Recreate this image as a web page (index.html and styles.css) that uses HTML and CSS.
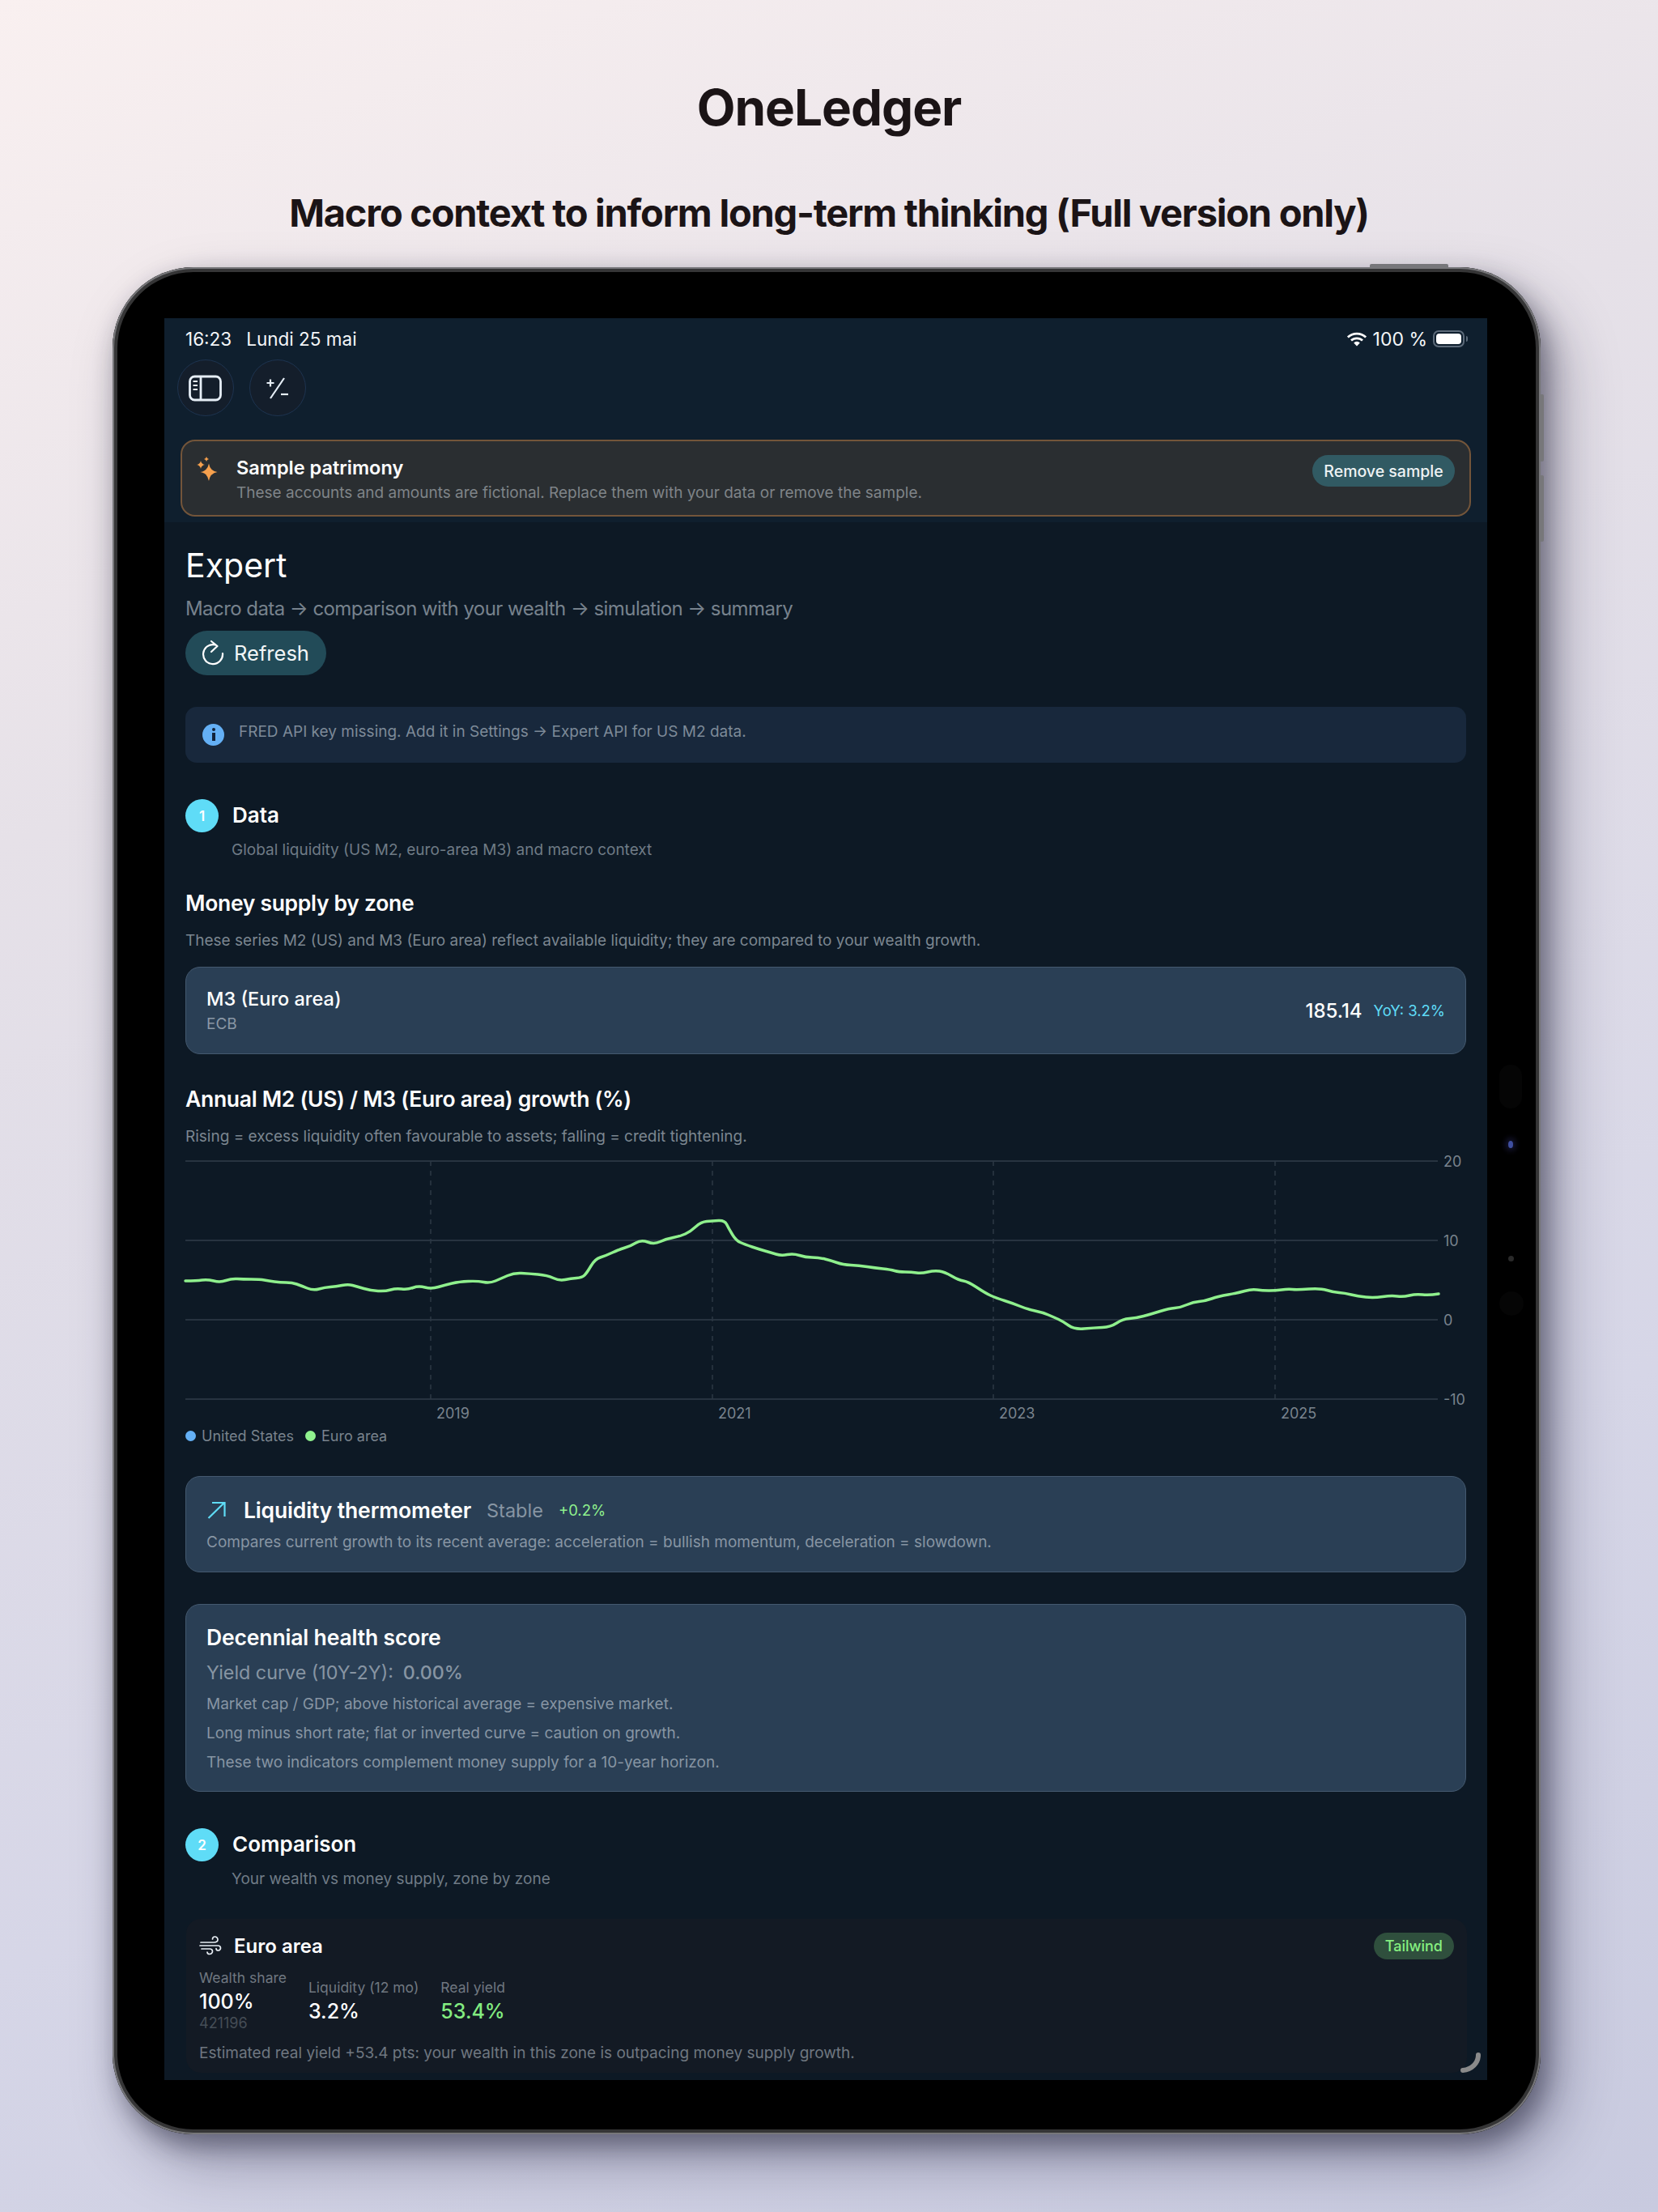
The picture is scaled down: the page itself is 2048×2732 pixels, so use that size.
FILE: index.html
```html
<!DOCTYPE html>
<html lang="en">
<head>
  <meta charset="UTF-8">
  <title>OneLedger</title>
  <link rel="stylesheet" href="styles.css">
</head>
<body>
  <h1 class="page-title">OneLedger</h1>
  <h2 class="page-sub">Macro context to inform long-term thinking (Full version only)</h2>

  <div class="device">
    <!-- hardware buttons and cameras -->
    <span class="hw hw-top"></span>
    <span class="hw hw-side1"></span>
    <span class="hw hw-side2"></span>
    <span class="cam cam-pill"></span>
    <span class="cam cam-blue"></span>
    <span class="cam cam-dot"></span>
    <span class="cam cam-round"></span>

    <div class="screen">
      <!-- Top bar -->
      <div class="topbar">
        <div class="status">
          <span class="status-time">16:23</span>
          <span>Lundi 25 mai</span>
          <span class="status-right">
            <svg class="wifi" width="26" height="18" viewBox="0 0 24 17" fill="none" stroke="#fff" stroke-width="2.6" stroke-linecap="butt">
              <path d="M1.5 6.2a15 15 0 0 1 21 0"/>
              <path d="M5.4 10a9.6 9.6 0 0 1 13.2 0"/>
              <path d="M12 16.5l-3.6-3.8a5 5 0 0 1 7.2 0z" fill="#fff" stroke="none"/>
            </svg>
            <span>100 %</span>
            <span class="battery"><span class="battery-fill"></span></span>
          </span>
        </div>
        <div class="tools">
          <span class="tool">
            <svg width="42" height="33" viewBox="0 0 42 33" fill="none" stroke="#e6eef6" stroke-width="2.800">
              <rect x="1.500" y="2" width="38" height="29" rx="6"/>
              <path d="M15 2v29"/>
              <path d="M5.500 8h5.500M5.500 13h5.500M5.500 18h5.500" stroke-width="2"/>
            </svg>
          </span>
          <span class="tool">
            <svg width="30" height="34" viewBox="0 0 30 34" fill="none" stroke="#e6eef6" stroke-width="2.200">
              <path d="M1.500 11h9M6 6.500v9"/>
              <path d="M23 5L6 30"/>
              <path d="M19 25h9"/>
            </svg>
          </span>
        </div>
        <div class="sample">
          <svg class="sample-icon" width="30" height="34" viewBox="0 0 30 34" fill="#f6a04d">
            <path d="M17 9.500Q18.500 18.500 27.500 20 18.500 21.500 17 31 15.500 21.500 6.500 20 15.500 18.500 17 9.500z"/>
            <path d="M7 6Q7.800 10.200 12 11 7.800 11.800 7 16 6.200 11.800 2 11 6.200 10.200 7 6z"/>
            <path d="M14 1Q14.500 3.500 17 4 14.500 4.500 14 7 13.500 4.500 11 4 13.500 3.500 14 1z"/>
          </svg>
          <div class="sample-text">
            <div class="sample-title">Sample patrimony</div>
            <div class="sample-desc">These accounts and amounts are fictional. Replace them with your data or remove the sample.</div>
          </div>
          <button class="sample-btn">Remove sample</button>
        </div>
      </div>

      <!-- Expert page -->
      <div class="content">
        <div class="expert-title">Expert</div>
        <div class="expert-sub">Macro data → comparison with your wealth → simulation → summary</div>
        <button class="refresh">
          <svg width="28" height="34" viewBox="0 0 28 34" fill="none" stroke="#fff" stroke-width="2.200" stroke-linecap="round" stroke-linejoin="round">
            <path d="M17 6.500A12 12 0 1 0 26 17"/>
            <path d="M12 2l7.500 6L12 15"/>
          </svg>
          Refresh
        </button>

        <div class="info">
          <span class="info-icon"><span class="info-i"></span></span>
          <span>FRED API key missing. Add it in Settings → Expert API for US M2 data.</span>
        </div>

        <div class="step step-first"><span class="step-num">1</span><span class="step-title">Data</span></div>
        <div class="step-sub">Global liquidity (US M2, euro-area M3) and macro context</div>

        <div class="section-title money">Money supply by zone</div>
        <div class="desc desc-under">These series M2 (US) and M3 (Euro area) reflect available liquidity; they are compared to your wealth growth.</div>

        <div class="card m3">
          <div>
            <div class="m3-name">M3 (Euro area)</div>
            <div class="m3-src">ECB</div>
          </div>
          <div class="m3-right">
            <span class="m3-val">185.14</span>
            <span class="m3-yoy">YoY: 3.2%</span>
          </div>
        </div>

        <div class="section-title annual">Annual M2 (US) / M3 (Euro area) growth (%)</div>
        <div class="desc desc-under">Rising = excess liquidity often favourable to assets; falling = credit tightening.</div>

        <svg class="chart" width="1582" height="340" viewBox="229 1420 1582 340">
          <g class="grid">
            <path d="M229 1434H1776M229 1532H1776M229 1630H1776M229 1728H1776"/>
          </g>
          <g class="grid-v">
            <path d="M532 1434V1728M880 1434V1728M1227 1434V1728M1575 1434V1728"/>
          </g>
          <path class="curve" d="M229 1582Q243 1582 249.500 1581Q256 1580 264 1582Q272 1584 279 1581.500Q286 1579 293 1579.500Q300 1580 310.500 1580Q321 1580 326.500 1581Q332 1582 339 1583Q346 1584 353.500 1584Q361 1584 366.500 1586Q372 1588 379.500 1591Q387 1594 394 1592Q401 1590 408 1589.500Q415 1589 422.500 1587.500Q430 1586 435.500 1587.500Q441 1589 449.500 1591.500Q458 1594 467 1594.500Q476 1595 482.500 1593Q489 1591 496 1592Q503 1593 510 1590.500Q517 1588 525 1590Q533 1592 541.500 1589.500Q550 1587 558.500 1585Q567 1583 578.500 1582.500Q590 1582 597.500 1583.500Q605 1585 612 1582Q619 1579 627 1575.500Q635 1572 644 1572.500Q653 1573 664.500 1574Q676 1575 683.500 1578.500Q691 1582 698 1580.500Q705 1579 712 1578.500Q719 1578 722 1575Q725 1572 730 1563.500Q735 1555 741.500 1553Q748 1551 756.500 1547Q765 1543 772 1541Q779 1539 785.500 1535Q792 1531 800 1534Q808 1537 815.500 1533.500Q823 1530 831.500 1528.500Q840 1527 846.500 1524Q853 1521 859.500 1515Q866 1509 873 1508.500Q880 1508 887.500 1507.500Q895 1507 897.500 1512Q900 1517 904.500 1524.500Q909 1532 914.500 1534.500Q920 1537 929 1540Q938 1543 945 1545Q952 1547 958.500 1549Q965 1551 972.500 1549.500Q980 1548 987.500 1550.500Q995 1553 1003 1553Q1011 1553 1019 1555Q1027 1557 1034 1559.500Q1041 1562 1051 1562.500Q1061 1563 1071 1564.500Q1081 1566 1090.500 1567Q1100 1568 1105 1569.500Q1110 1571 1118 1571Q1126 1571 1132 1572Q1138 1573 1146 1571Q1154 1569 1160.500 1570Q1167 1571 1175.500 1576Q1184 1581 1190 1582Q1196 1583 1206.500 1590Q1217 1597 1223.500 1600Q1230 1603 1241 1606.500Q1252 1610 1260.500 1613.500Q1269 1617 1278.500 1619Q1288 1621 1295 1624Q1302 1627 1307.500 1629.500Q1313 1632 1320 1637Q1327 1642 1339 1641Q1351 1640 1361.500 1639.500Q1372 1639 1379.500 1634Q1387 1629 1395 1628.500Q1403 1628 1412.500 1625.500Q1422 1623 1433 1619.500Q1444 1616 1451 1615.500Q1458 1615 1466 1611.500Q1474 1608 1481 1607.500Q1488 1607 1496.500 1604Q1505 1601 1517 1599Q1529 1597 1537.500 1594.500Q1546 1592 1552.500 1593Q1559 1594 1567.500 1594Q1576 1594 1583 1593Q1590 1592 1596.500 1592.500Q1603 1593 1617 1592Q1631 1591 1639 1593.500Q1647 1596 1654 1596.500Q1661 1597 1669 1599Q1677 1601 1687 1602Q1697 1603 1708 1601.500Q1719 1600 1726 1601Q1733 1602 1741 1600Q1749 1598 1757 1599Q1765 1600 1777 1598"/>
          <g class="axis">
            <text x="1783" y="1441">20</text>
            <text x="1783" y="1539">10</text>
            <text x="1783" y="1637">0</text>
            <text x="1783" y="1735">-10</text>
            <text x="539" y="1752">2019</text>
            <text x="887" y="1752">2021</text>
            <text x="1234" y="1752">2023</text>
            <text x="1582" y="1752">2025</text>
          </g>
        </svg>

        <div class="legend">
          <span class="legend-dot dot-blue"></span><span>United States</span>
          <span class="legend-dot dot-green"></span><span>Euro area</span>
        </div>

        <div class="card thermo">
          <div class="thermo-head">
            <svg width="24" height="22" viewBox="0 0 24 22" fill="none" stroke="#5fdcf5" stroke-width="2.200">
              <path d="M1.500 21L21 2M6 2h15.500v17"/>
            </svg>
            <span class="card-title">Liquidity thermometer</span>
            <span class="thermo-state">Stable</span>
            <span class="thermo-delta">+0.2%</span>
          </div>
          <div class="card-note">Compares current growth to its recent average: acceleration = bullish momentum, deceleration = slowdown.</div>
        </div>

        <div class="card decennial">
          <div class="card-title">Decennial health score</div>
          <div class="yield">Yield curve (10Y-2Y):<span class="yield-val">0.00%</span></div>
          <div class="dec-line">Market cap / GDP; above historical average = expensive market.</div>
          <div class="dec-line">Long minus short rate; flat or inverted curve = caution on growth.</div>
          <div class="dec-line">These two indicators complement money supply for a 10-year horizon.</div>
        </div>

        <div class="step step-second"><span class="step-num">2</span><span class="step-title">Comparison</span></div>
        <div class="step-sub step-sub2">Your wealth vs money supply, zone by zone</div>

        <div class="zone">
          <div class="zone-head">
            <svg width="28" height="24" viewBox="0 0 28 24" fill="none" stroke="#e8eef4" stroke-width="1.700" stroke-linecap="round">
              <path d="M2 8h16c4 0 5-2 5-3.500S21.500 1 19.500 1 16.500 2.500 16.500 4"/>
              <path d="M1 12h22c2.500 0 3.500 1.500 3.500 3s-1.500 3-3 3-2.500-1-2.500-2.500"/>
              <path d="M3 16h10c2.500 0 3.500 1.500 3.500 3s-1.500 3.500-3.500 3.500-3-1-3-2.500"/>
            </svg>
            <span class="zone-name">Euro area</span>
            <span class="badge">Tailwind</span>
          </div>
          <div class="metrics">
            <div class="metric">
              <div class="metric-label">Wealth share</div>
              <div class="metric-val">100%</div>
              <div class="metric-extra">421196</div>
            </div>
            <div class="metric">
              <div class="metric-label">Liquidity (12 mo)</div>
              <div class="metric-val">3.2%</div>
            </div>
            <div class="metric">
              <div class="metric-label">Real yield</div>
              <div class="metric-val metric-green">53.4%</div>
            </div>
          </div>
          <div class="zone-note">Estimated real yield +53.4 pts: your wealth in this zone is outpacing money supply growth.</div>
        </div>
      </div>

      <svg class="corner" width="30" height="30" viewBox="0 0 30 30" fill="none" stroke="#8a8a8a" stroke-width="6" stroke-linecap="round">
        <path d="M25 5c0 10-8 18-19 19"/>
      </svg>
    </div>
  </div>
</body>
</html>
```

FILE: styles.css
```css
/* Page */
html, body {
  margin: 0;
  height: 2732px;
  overflow: hidden;
}
body {
  display: flex;
  flex-direction: column;
  align-items: center;
  padding-top: 93px;
  box-sizing: border-box;
  background: linear-gradient(160deg, #f9f0f0 0%, #e6e1e8 30%, #d6d6e7 70%, #c8cadf 100%);
  font-family: Inter, "Liberation Sans", sans-serif;
}
.page-title {
  margin: 0;
  height: 80px;
  line-height: 80px;
  font-size: 62px;
  font-weight: 700;
  letter-spacing: -1px;
  color: #1b1416;
}
.page-sub {
  margin: 60px 0 0;
  height: 60px;
  line-height: 60px;
  font-size: 47px;
  font-weight: 700;
  letter-spacing: -1.25px;
  color: #1b1416;
}

/* Device frame */
.device {
  position: relative;
  margin: 37px 6px 0 0;
  width: 1764px;
  height: 2306px;
  box-sizing: border-box;
  padding: 63px 66px 67px 64px;
  background: #000;
  border-radius: 100px;
  box-shadow:
    inset 0 0 0 2px #77777a,
    inset 0 0 0 6px #353536,
    8px 14px 30px rgba(30, 30, 50, 0.45),
    24px 34px 70px rgba(30, 30, 60, 0.35);
}
.hw {
  position: absolute;
  background: #77777a;
}
.hw-top {
  left: 1553px;
  top: -4px;
  width: 97px;
  height: 4px;
  border-radius: 2px 2px 0 0;
}
.hw-side1, .hw-side2 {
  left: 100%;
  width: 4px;
  border-radius: 0 2px 2px 0;
}
.hw-side1 { top: 157px; height: 83px; }
.hw-side2 { top: 257px; height: 82px; }
.cam {
  position: absolute;
  border-radius: 50%;
}
.cam-pill {
  left: 1713px;
  top: 985px;
  width: 28px;
  height: 54px;
  border-radius: 14px;
  background: #050505;
}
.cam-blue {
  left: 1724px;
  top: 1079px;
  width: 6px;
  height: 9px;
  background: #3f4fa0;
  box-shadow: 0 0 6px 4px #12122a;
}
.cam-dot {
  left: 1724px;
  top: 1221px;
  width: 7px;
  height: 7px;
  background: #2a2a2a;
}
.cam-round {
  left: 1713px;
  top: 1265px;
  width: 30px;
  height: 30px;
  background: #050505;
}

/* Screen */
.screen {
  position: relative;
  height: 2176px;
  overflow: hidden;
  background: #0d1925;
  color: #fff;
}
.topbar {
  height: 252px;
  box-sizing: border-box;
  padding-top: 11px;
  background: #0f1f2e;
}
.status {
  display: flex;
  align-items: center;
  height: 29px;
  padding: 0 28px 0 26px;
  font-size: 22.500px;
  color: #f4f6f8;
}
.status-time {
  margin-right: 18px;
}
.status-right {
  margin-left: auto;
  display: flex;
  align-items: center;
  gap: 7px;
  font-size: 23px;
}
.battery {
  position: relative;
  display: block;
  width: 39px;
  height: 21px;
  box-sizing: border-box;
  border: 2px solid #5d6b7a;
  border-radius: 7px;
  padding: 2px;
}
.battery::after {
  content: "";
  position: absolute;
  right: -6px;
  top: 5px;
  width: 2px;
  height: 7px;
  background: #5d6b7a;
  border-radius: 0 2px 2px 0;
}
.battery-fill {
  display: block;
  height: 100%;
  background: #fff;
  border-radius: 4px;
}
.tools {
  display: flex;
  gap: 19px;
  margin: 11px 0 0 16px;
}
.tool {
  display: flex;
  align-items: center;
  justify-content: center;
  width: 70px;
  height: 70px;
  box-sizing: border-box;
  border: 1.500px solid #1e3450;
  border-radius: 50%;
  background: #141e2b;
}

/* Sample banner */
.sample {
  display: flex;
  align-items: flex-start;
  height: 95px;
  box-sizing: border-box;
  margin: 29px 20px 0;
  padding: 18px 18px 0 16px;
  background: #2a2e31;
  border: 2px solid #73553a;
  border-radius: 18px;
}
.sample-icon {
  flex-shrink: 0;
}
.sample-text {
  margin-left: 21px;
}
.sample-title {
  height: 30px;
  line-height: 30px;
  font-size: 23.500px;
  font-weight: 600;
}
.sample-desc {
  margin-top: 4px;
  line-height: 24px;
  font-size: 19px;
  color: #7f8488;
}
.sample-btn {
  margin: -1px 0 0 auto;
  height: 39px;
  width: 176px;
  padding: 0;
  border: none;
  border-radius: 20px;
  background: #315a63;
  color: #eef3f4;
  font: 500 19.500px Inter, "Liberation Sans", sans-serif;
}

/* Content */
.content {
  padding: 0 26px;
}
.expert-title {
  margin-top: 28px;
  height: 50px;
  line-height: 50px;
  font-size: 41px;
}
.expert-sub {
  margin-top: 14px;
  height: 30px;
  line-height: 30px;
  font-size: 24px;
  letter-spacing: -0.56px;
  color: #77828d;
}
.refresh {
  display: flex;
  align-items: center;
  gap: 12px;
  margin-top: 12px;
  height: 55px;
  padding: 0 21px 0 20px;
  border: none;
  border-radius: 28px;
  background: #224b58;
  color: #f2f6f7;
  font: 400 25.500px Inter, "Liberation Sans", sans-serif;
}
.info {
  display: flex;
  align-items: flex-start;
  margin-top: 39px;
  height: 69px;
  box-sizing: border-box;
  padding: 19px 0 0 21px;
  background: #18283c;
  border-radius: 14px;
  line-height: 24px;
  font-size: 19px;
  color: #7d8a98;
}
.info-icon {
  position: relative;
  flex-shrink: 0;
  width: 27px;
  height: 27px;
  margin: 2px 18px 0 0;
  border-radius: 50%;
  background: #64b0f5;
}
.info-i {
  position: absolute;
  left: 12px;
  top: 11px;
  width: 4px;
  height: 10px;
  background: #12233a;
}
.info-i::before {
  content: "";
  position: absolute;
  left: 0;
  top: -6px;
  width: 4px;
  height: 4px;
  border-radius: 50%;
  background: #12233a;
}

/* Numbered steps */
.step {
  display: flex;
  align-items: center;
  gap: 17px;
  height: 41px;
}
.step-first { margin-top: 45px; }
.step-second { margin-top: 45px; }
.step-num {
  display: flex;
  align-items: center;
  justify-content: center;
  width: 41px;
  height: 41px;
  border-radius: 50%;
  background: #5fdcf7;
  font-size: 17px;
  font-weight: 600;
}
.step-title {
  margin-top: -2px;
  font-size: 26px;
  font-weight: 600;
}
.step-sub {
  margin: 10px 0 0 57px;
  height: 24px;
  line-height: 24px;
  font-size: 19px;
  color: #6f7b86;
}
.step-sub2 {
  margin-top: 10px;
}
.section-title {
  height: 34px;
  line-height: 34px;
  font-size: 26.500px;
  font-weight: 600;
  letter-spacing: -0.3px;
}
.money { margin-top: 36px; }
.annual { margin-top: 38px; }
.desc {
  height: 24px;
  line-height: 24px;
  font-size: 19px;
  color: #7b8690;
}
.desc-under { margin-top: 18px; }

/* Cards */
.card {
  box-sizing: border-box;
  background: #2a3f55;
  border: 1.500px solid #44596f;
  border-radius: 18px;
}
.card-title {
  line-height: 34px;
  font-size: 26.500px;
  font-weight: 600;
  letter-spacing: -0.15px;
}
.m3 {
  display: flex;
  align-items: center;
  justify-content: space-between;
  margin-top: 20px;
  height: 108px;
  padding: 0 25px;
}
.m3-name {
  margin-top: -2px;
  line-height: 30px;
  font-size: 23.500px;
  font-weight: 500;
}
.m3-src {
  margin-top: 5px;
  line-height: 22px;
  font-size: 19px;
  color: #8a98a6;
}
.m3-right {
  display: flex;
  align-items: center;
  gap: 14px;
}
.m3-val {
  font-size: 24px;
  font-weight: 500;
}
.m3-yoy {
  font-size: 18.500px;
  color: #5fdcf7;
}

/* Chart */
.chart {
  display: block;
  margin-top: 4px;
  overflow: visible;
}
.grid path {
  fill: none;
  stroke: #313d49;
  stroke-width: 1.500;
}
.grid-v path {
  fill: none;
  stroke: #2c3844;
  stroke-width: 1.500;
  stroke-dasharray: 6 6;
}
.curve {
  fill: none;
  stroke: #8ff08d;
  stroke-width: 3.500;
  stroke-linejoin: round;
  stroke-linecap: round;
}
.axis text {
  font-size: 18px;
  fill: #79838d;
}
.legend {
  display: flex;
  align-items: center;
  margin-top: 3px;
  height: 20px;
  font-size: 18px;
  color: #79838d;
}
.legend-dot {
  width: 13px;
  height: 13px;
  margin-right: 7px;
  border-radius: 50%;
}
.dot-blue { background: #64b0f5; }
.dot-green { background: #90f28e; margin-left: 14px; }

/* Thermometer card */
.thermo {
  margin-top: 40px;
  height: 119px;
  padding: 24px 25px 0;
}
.thermo-head {
  display: flex;
  align-items: center;
  height: 34px;
}
.thermo-head svg {
  margin: 0 21px 0 1px;
}
.thermo-state {
  margin-left: 19px;
  font-size: 23.500px;
  color: #8795a3;
}
.thermo-delta {
  margin-left: 19px;
  font-size: 18.500px;
  color: #8ff08d;
}
.card-note {
  margin-top: 10px;
  line-height: 26px;
  font-size: 19px;
  color: #8795a3;
}

/* Decennial card */
.decennial {
  margin-top: 39px;
  height: 232px;
  padding: 23px 25px 0;
}
.yield {
  margin-top: 11px;
  line-height: 32px;
  font-size: 23.300px;
  color: #8795a3;
}
.yield-val {
  margin-left: 12px;
  font-weight: 500;
}
.dec-line {
  margin-top: 10px;
  line-height: 26px;
  font-size: 19px;
  color: #8795a3;
}
.yield + .dec-line {
  margin-top: 10px;
}

/* Zone comparison */
.zone {
  margin: 37px -1px 0 1px;
  height: 190px;
  box-sizing: border-box;
  padding: 15px 16px 0;
  background: #131a24;
  border-radius: 18px;
}
.zone-head {
  display: flex;
  align-items: center;
  height: 36px;
}
.zone-name {
  margin-left: 15px;
  font-size: 24px;
  font-weight: 600;
}
.badge {
  margin-left: auto;
  height: 33px;
  line-height: 33px;
  padding: 0 14px;
  border-radius: 17px;
  background: #2f4f3d;
  color: #86ef80;
  font-size: 18px;
  font-weight: 500;
}
.metrics {
  display: flex;
  align-items: center;
  gap: 27px;
  margin-top: 10px;
}
.metric-label {
  line-height: 24px;
  font-size: 17.500px;
  color: #6f7780;
}
.metric-val {
  margin-top: 2px;
  line-height: 30px;
  font-size: 25px;
  font-weight: 500;
}
.metric-green {
  color: #83ec80;
}
.metric-extra {
  line-height: 24px;
  font-size: 18px;
  color: #454d56;
}
.zone-note {
  margin-top: 13px;
  line-height: 24px;
  font-size: 19px;
  color: #6f7780;
}
.corner {
  position: absolute;
  right: 6px;
  bottom: 6px;
}
```
